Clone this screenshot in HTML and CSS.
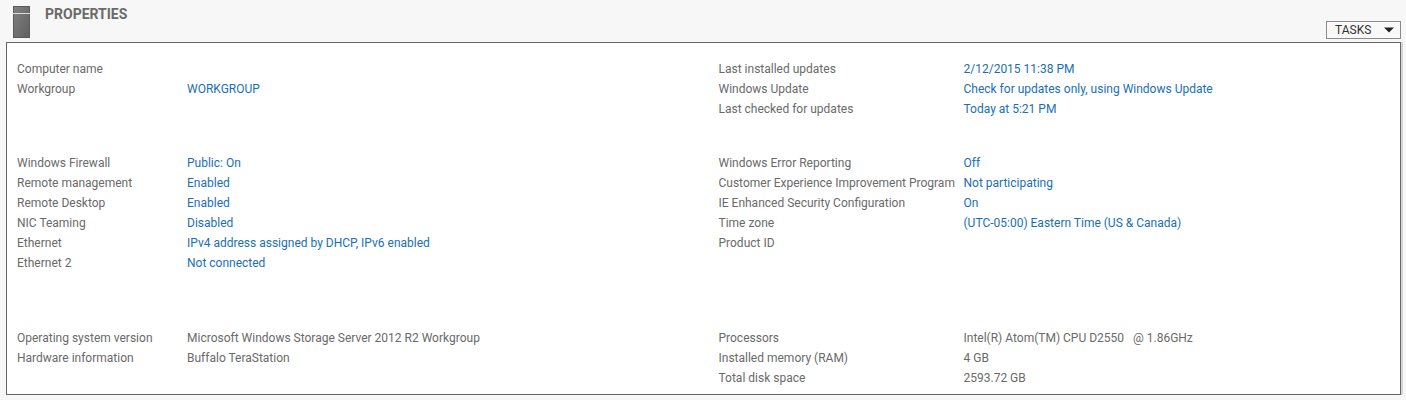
FILE: index.html
```
<!DOCTYPE html>
<html lang="en">
<head>
	<meta charset="UTF-8">
	<title>Properties</title>
	<link rel="stylesheet" href="styles.css">
</head>
<body>
	<div class="header">
		<svg class="server" width="17" height="32" viewBox="0 0 17 32">
			<defs>
				<linearGradient id="metal" x1="0" y1="0" x2="1" y2="1">
					<stop offset="0" stop-color="#808080"/>
					<stop offset="1" stop-color="#606060"/>
				</linearGradient>
			</defs>
			<rect width="17" height="32" fill="#5a5a5a"/>
			<rect x="1" y="1" width="15" height="30" fill="url(#metal)"/>
			<rect y="7" width="17" height="1" fill="#dcdcdc"/>
		</svg>
		<h1>PROPERTIES</h1>
		<button type="button" class="tasks">TASKS
			<svg width="10" height="6" viewBox="0 0 10 6"><path d="M0 0.5h10L5 5.5z" fill="#222"/></svg>
		</button>
	</div>

	<div class="panel">
		<div class="group">
			<table class="left">
				<tr><th scope="row">Computer name</th><td></td></tr>
				<tr><th scope="row">Workgroup</th><td><a href="#">WORKGROUP</a></td></tr>
			</table>
			<table class="right">
				<tr><th scope="row">Last installed updates</th><td><a href="#">2/12/2015 11:38 PM</a></td></tr>
				<tr><th scope="row">Windows Update</th><td><a href="#">Check for updates only, using Windows Update</a></td></tr>
				<tr><th scope="row">Last checked for updates</th><td><a href="#">Today at 5:21 PM</a></td></tr>
			</table>
		</div>

		<div class="group">
			<table class="left">
				<tr><th scope="row">Windows Firewall</th><td><a href="#">Public: On</a></td></tr>
				<tr><th scope="row">Remote management</th><td><a href="#">Enabled</a></td></tr>
				<tr><th scope="row">Remote Desktop</th><td><a href="#">Enabled</a></td></tr>
				<tr><th scope="row">NIC Teaming</th><td><a href="#">Disabled</a></td></tr>
				<tr><th scope="row">Ethernet</th><td><a href="#">IPv4 address assigned by DHCP, IPv6 enabled</a></td></tr>
				<tr><th scope="row">Ethernet 2</th><td><a href="#">Not connected</a></td></tr>
			</table>
			<table class="right">
				<tr><th scope="row">Windows Error Reporting</th><td><a href="#">Off</a></td></tr>
				<tr><th scope="row">Customer Experience Improvement Program</th><td><a href="#">Not participating</a></td></tr>
				<tr><th scope="row">IE Enhanced Security Configuration</th><td><a href="#">On</a></td></tr>
				<tr><th scope="row">Time zone</th><td><a href="#">(UTC-05:00) Eastern Time (US &amp; Canada)</a></td></tr>
				<tr><th scope="row">Product ID</th><td></td></tr>
			</table>
		</div>

		<div class="group system">
			<table class="left">
				<tr><th scope="row">Operating system version</th><td>Microsoft Windows Storage Server 2012 R2 Workgroup</td></tr>
				<tr><th scope="row">Hardware information</th><td>Buffalo TeraStation</td></tr>
			</table>
			<table class="right">
				<tr><th scope="row">Processors</th><td>Intel(R) Atom(TM) CPU D2550 &nbsp; @ 1.86GHz</td></tr>
				<tr><th scope="row">Installed memory (RAM)</th><td>4 GB</td></tr>
				<tr><th scope="row">Total disk space</th><td>2593.72 GB</td></tr>
			</table>
		</div>
	</div>
</body>
</html>
```
FILE: styles.css
```
* {box-sizing: border-box;}
body {margin: 0; padding: 0 5px 0 6px; background: #f7f7f7; color: #6a6a6a; font: 12px/20px Roboto, "Open Sans", sans-serif;}

.header {display: flex; align-items: flex-start; height: 42px; padding-left: 7px;}
.server {margin-top: 6px;}
h1 {margin: 4px 0 0 15px; font-size: 14px; font-weight: bold; line-height: 20px;}
.tasks {display: flex; align-items: center; justify-content: space-between; width: 75px; height: 18px; margin: 21px 0 0 auto; padding: 0 6px 0 8px; border: 1px solid #8a8a8a; background: #f9f9f9; color: #333; font: inherit; line-height: 16px;}

.panel {padding: 16px 10px 6px; border: 1px solid #666; background: #fff; box-shadow: 1px 1px 0 1px #d6d6d6;}
.group {display: grid; grid-template-columns: 1fr 1fr; gap: 30px; margin-bottom: 34px;}
.group + .group {margin-bottom: 55px;}
.group.system {margin-bottom: 0;}
table {width: 100%; align-self: start; border-collapse: collapse; table-layout: fixed;}
th, td {height: 20px; padding: 0; text-align: left; font-weight: normal; white-space: nowrap;}
.left th {width: 170px;}
.right th {width: 245px;}
a {color: #1a6fb5; text-decoration: none;}
a:hover {text-decoration: underline;}
```
